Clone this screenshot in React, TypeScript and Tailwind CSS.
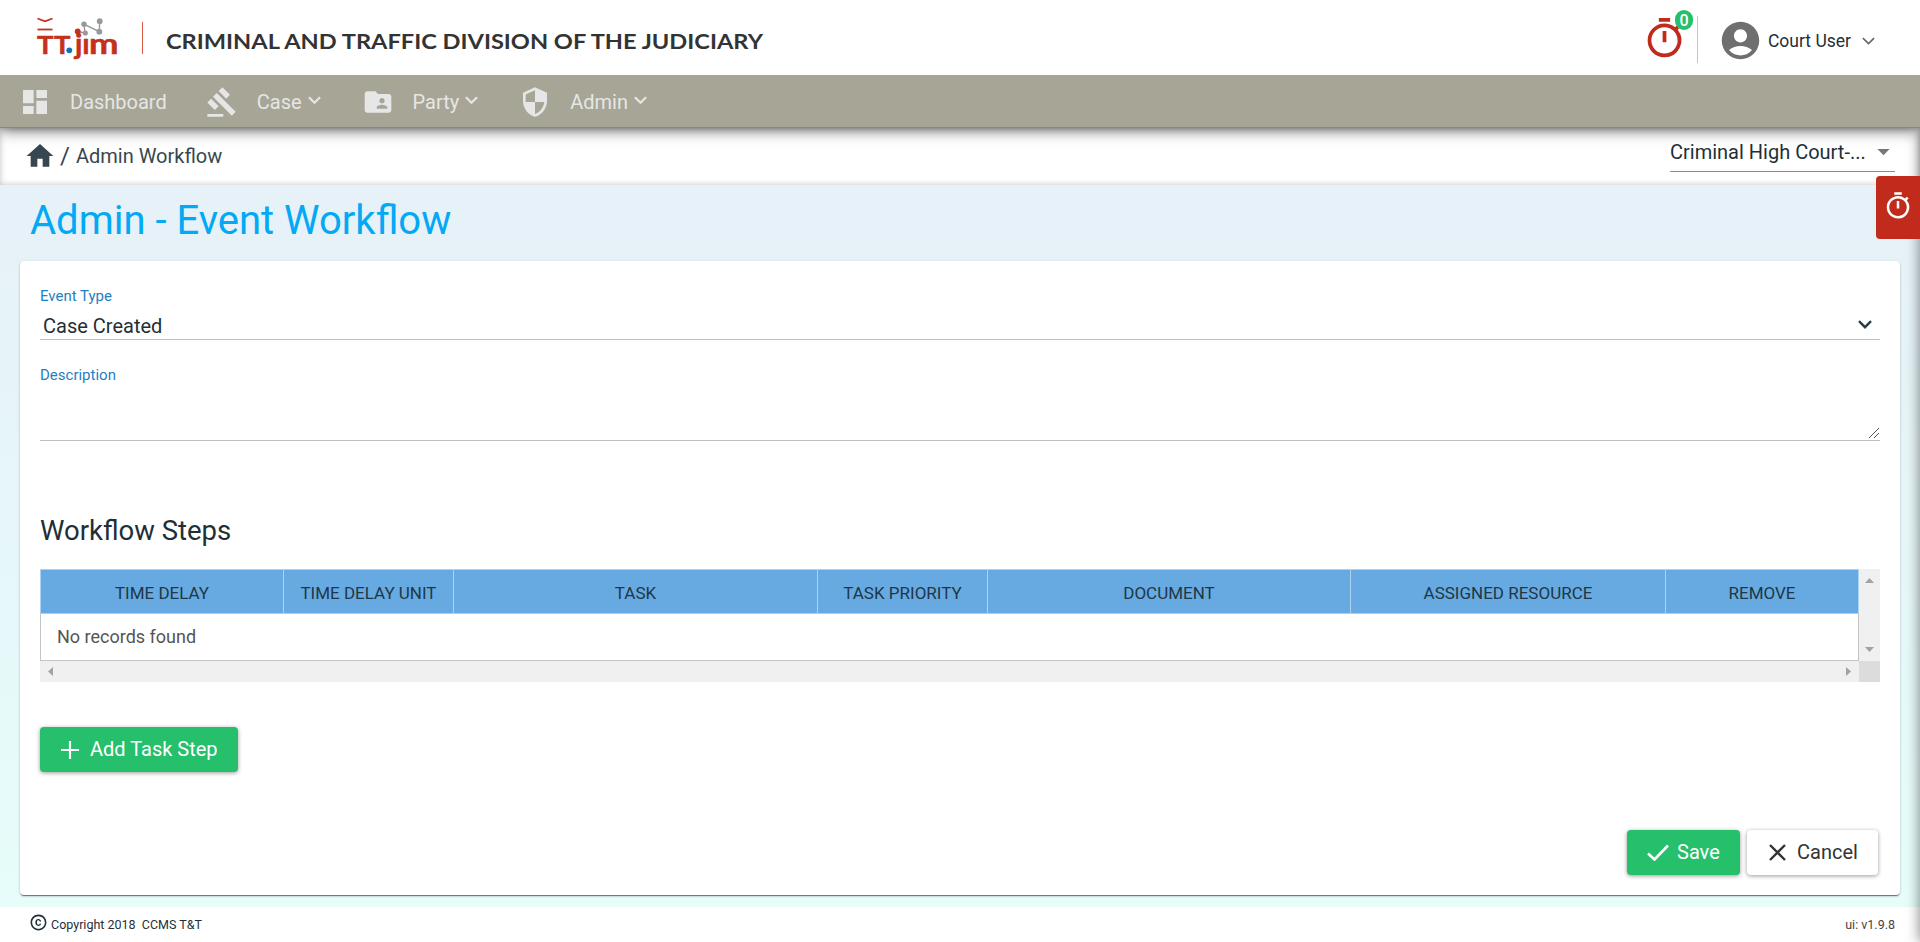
import type { ReactNode } from "react";
import {
  MdAccountCircle,
  MdArrowDropDown,
  MdCopyright,
  MdDashboard,
  MdFolderShared,
  MdGavel,
  MdHome,
  MdOutlineTimer,
  MdSecurity,
} from "react-icons/md";

function Chevron({ className }: { className: string }) {
  return (
    <svg className={className} viewBox="0 0 14 9" fill="none" stroke="currentColor" strokeWidth="2.400">
      <path d="M1 1.200l6 6 6-6" />
    </svg>
  );
}

function Logo() {
  return (
    <svg className="h-[44px] w-[84px] shrink-0" viewBox="36 18 84 44" fill="none">
      <path d="M37.500 20.500l7.500 2.800 7.500-2.800" stroke="#c4301c" strokeWidth="1.800" />
      <path d="M37.500 31.500h15" stroke="#c4301c" strokeWidth="1.800" />
      <path d="M78 33.500L85 35 84 26.300 99.300 33.700 99.700 23.200" stroke="#97999c" strokeWidth="1.400" />
      <g fill="#97999c">
        <circle cx="84" cy="26.300" r="2.700" />
        <circle cx="99.700" cy="23.200" r="2.900" />
        <circle cx="99.300" cy="33.700" r="2.900" />
        <circle cx="85.300" cy="35" r="2.600" />
      </g>
      <g
        fill="#c4301c"
        stroke="#c4301c"
        strokeWidth="0.5"
        strokeLinejoin="round"
        fontSize="25.500"
        className="font-['Lato',sans-serif] font-bold"
      >
        <text x="37" y="55.500" textLength="16.500" lengthAdjust="spacingAndGlyphs">T</text>
        <text x="54" y="55.500" textLength="16.500" lengthAdjust="spacingAndGlyphs">T</text>
        <text x="75" y="55.500" fontSize="29">j</text>
        <text x="82.300" y="55.500" fontSize="29">ı</text>
        <text x="89" y="55.500" fontSize="29" textLength="29.500" lengthAdjust="spacingAndGlyphs">m</text>
      </g>
      <circle cx="77.700" cy="33.400" r="2.900" fill="#c4301c" />
      <circle cx="69.300" cy="52.300" r="2.900" fill="#1272b8" />
    </svg>
  );
}

function Header() {
  return (
    <header className="relative z-20 flex h-[75px] shrink-0 items-center bg-white pl-9 pr-[45px]">
      <Logo />
      <div className="ml-[22px] h-8 w-px bg-[#dc5a43]" />
      <div className="ml-[23px] mt-[9px] w-[600px]">
        <svg className="block h-[30px] w-[600px]" viewBox="0 0 600 30">
          <text
            x="0"
            y="22"
            fontSize="21.500"
            textLength="597"
            lengthAdjust="spacingAndGlyphs"
            fill="#333"
            className="font-['Lato',sans-serif] font-bold"
          >
            CRIMINAL AND TRAFFIC DIVISION OF THE JUDICIARY
          </text>
        </svg>
      </div>
      <div className="ml-auto flex items-center">
        <div className="relative mt-[2px]">
          <MdOutlineTimer className="size-[45px] text-[#c02b1b]" />
          <span className="absolute -top-[6px] left-[33px] flex h-5 w-[18px] items-center justify-center rounded-full bg-[#26bf6b] pt-px text-base font-medium text-white">
            0
          </span>
        </div>
        <div className="ml-[10px] mt-[4px] h-[47px] w-px bg-[#c4c4c4]" />
        <MdAccountCircle className="ml-5 mt-[6px] size-[45px] text-[#6f6f6f]" />
        <span className="ml-[5px] mt-[8px] text-[17.500px]">Court User</span>
        <svg className="ml-[11px] mt-[6px] h-2 w-[13px]" viewBox="0 0 14 8" fill="none">
          <path d="M1 1l6 5.700L13 1" stroke="#666" strokeWidth="1.800" />
        </svg>
      </div>
    </header>
  );
}

function NavItem({ icon, label, menu }: { icon: ReactNode; label: string; menu?: boolean }) {
  return (
    <a className="flex items-center">
      {icon}
      <span className="ml-[19px]">{label}</span>
      {menu && <Chevron className="-mt-[3px] ml-[6px] mr-[6px] h-[8.500px] w-[13px]" />}
    </a>
  );
}

function Nav() {
  return (
    <nav className="relative z-10 flex h-[53px] shrink-0 items-center border-b border-[#8b8b6a] bg-[#a7a595] pl-[19px] pt-[2px] text-xl text-[#e6e6e6] shadow-[0_2px_14px_rgba(0,0,0,0.6)]">
      <NavItem icon={<MdDashboard className="size-8" />} label="Dashboard" />
      <div className="w-[39px]" />
      <NavItem icon={<MdGavel className="size-8" />} label="Case" menu />
      <div className="w-[35px]" />
      <NavItem icon={<MdFolderShared className="size-8" />} label="Party" menu />
      <div className="w-[35px]" />
      <NavItem icon={<MdSecurity className="size-8" />} label="Admin" menu />
    </nav>
  );
}

const columns = [
  { label: "TIME DELAY", width: "w-[243px]" },
  { label: "TIME DELAY UNIT", width: "w-[170px]" },
  { label: "TASK", width: "w-[364px]" },
  { label: "TASK PRIORITY", width: "w-[170px]" },
  { label: "DOCUMENT", width: "w-[363px]" },
  { label: "ASSIGNED RESOURCE", width: "w-[315px]" },
  { label: "REMOVE", width: "w-[193px]" },
];

function StepsTable() {
  return (
    <div className="mt-[22px]">
      <div className="flex">
        <div className="w-[1819px]">
          <div className="flex h-[45px] border-y border-l border-[#a9d2f3] bg-[#66aae1] text-[17px] text-[#1f3747]">
            {columns.map((c) => (
              <div
                key={c.label}
                className={`flex shrink-0 items-center justify-center border-r border-[#a9d2f3] pt-[4px] ${c.width}`}
              >
                {c.label}
              </div>
            ))}
          </div>
          <div className="flex h-[47px] items-center border-x border-b border-[#c4c4c4] pl-4 text-lg text-[#555]">
            No records found
          </div>
        </div>
        <div className="flex w-[21px] flex-col items-center justify-between bg-[#f0f0f0] py-[9px]">
          <svg className="h-[5px] w-[9px]" viewBox="0 0 9 5" fill="#a3a3a3">
            <path d="M0 5L4.500 0 9 5z" />
          </svg>
          <svg className="h-[5px] w-[9px]" viewBox="0 0 9 5" fill="#a3a3a3">
            <path d="M0 0h9L4.500 5z" />
          </svg>
        </div>
      </div>
      <div className="flex h-[21px]">
        <div className="flex w-[1819px] items-center justify-between bg-[#f0f0f0] px-2">
          <svg className="h-[9px] w-[5px]" viewBox="0 0 5 9" fill="#a3a3a3">
            <path d="M5 0v9L0 4.500z" />
          </svg>
          <svg className="h-[9px] w-[5px]" viewBox="0 0 5 9" fill="#a3a3a3">
            <path d="M0 0v9l5-4.500z" />
          </svg>
        </div>
        <div className="w-[21px] bg-[#dcdcdc]" />
      </div>
    </div>
  );
}

export default function App() {
  return (
    <div className="relative flex h-[942px] w-full flex-col overflow-hidden bg-white font-['Roboto',sans-serif] leading-none text-[#1f2f38]">
      <Header />
      <Nav />
      <div className="flex h-[57px] shrink-0 items-start justify-between bg-white pl-6 pr-[25px] shadow-[inset_0_0_6px_rgba(0,0,0,0.25)]">
        <div className="flex items-center pt-[12px] text-xl text-[#37474f]">
          <MdHome className="-mt-[1px] size-8 text-[#37474f]" />
          <span className="ml-1 text-2xl">/</span>
          <span className="ml-[6px]">Admin Workflow</span>
        </div>
        <div className="flex h-11 w-[225px] items-center justify-between border-b border-[#8a8a8a] pt-[4px] text-xl">
          <span>Criminal High Court-...</span>
          <MdArrowDropDown className="-mr-[3px] size-[29px] text-[#777]" />
        </div>
      </div>
      <main className="flex h-[722px] shrink-0 flex-col bg-linear-to-b from-[#e6f1f8] to-[#e6fdfa] px-5">
        <h1 className="ml-[10px] flex h-[76px] items-center pb-[5px] text-[40px] text-[#03a9f4]">
          Admin - Event Workflow
        </h1>
        <section className="flex h-[634px] flex-col rounded bg-white px-5 shadow-[0_1px_3px_rgba(0,0,0,0.2),0_1px_1px_rgba(0,0,0,0.14),0_2px_1px_-1px_rgba(0,0,0,0.4)]">
          <label className="mt-[26px] text-[15px] leading-[18px] text-[#1f80c1]">Event Type</label>
          <div className="flex h-[35px] items-center justify-between border-b border-[#bdbdbd] pl-[3px] pr-[8px] pt-[7px] text-xl">
            <span>Case Created</span>
            <Chevron className="-mt-[3px] h-[9px] w-[14px] text-[#263f4a]" />
          </div>
          <label className="mt-[26px] text-[15px] leading-[18px] text-[#1f80c1]">Description</label>
          <div className="flex h-[57px] items-end justify-end border-b border-[#bdbdbd] pb-[2px] pr-px">
            <svg className="size-[10px]" viewBox="0 0 10 10" fill="none" stroke="#555" strokeWidth="1">
              <path d="M0 10L10 0M5 10l5-5" />
            </svg>
          </div>
          <h2 className="mt-[74px] text-[27.500px] leading-[32px]">Workflow Steps</h2>
          <StepsTable />
          <button className="mt-[45px] flex h-[45px] w-[198px] shrink-0 items-center rounded bg-[#26bf6b] pl-[21px] text-xl text-white shadow-[0_1px_4px_rgba(0,0,0,0.4)]">
            <svg className="size-[18px]" viewBox="0 0 18 18" fill="none" stroke="currentColor" strokeWidth="2.200">
              <path d="M9 0v18M0 9h18" />
            </svg>
            <span className="-mt-[2px] ml-[11px]">Add Task Step</span>
          </button>
          <div className="mt-[58px] flex justify-end gap-[7px] pr-[2px] text-xl">
            <button className="flex h-[45px] w-[113px] items-center rounded bg-[#26bf6b] pl-5 text-white shadow-[0_1px_4px_rgba(0,0,0,0.4)]">
              <svg className="h-[17px] w-[22px]" viewBox="0 0 22 17" fill="none" stroke="currentColor" strokeWidth="2.600">
                <path d="M1 9.500l6.500 6L21 1.500" />
              </svg>
              <span className="-mt-[2px] ml-[8px]">Save</span>
            </button>
            <button className="flex h-[45px] w-[131px] items-center rounded bg-white pl-[22px] text-[#333] shadow-[0_1px_4px_rgba(0,0,0,0.4)]">
              <svg className="size-[17px]" viewBox="0 0 17 17" fill="none" stroke="currentColor" strokeWidth="2.400">
                <path d="M1 1l15 15M16 1L1 16" />
              </svg>
              <span className="-mt-[2px] ml-[11px]">Cancel</span>
            </button>
          </div>
        </section>
      </main>
      <footer className="flex h-[35px] shrink-0 items-center justify-between bg-white pl-[29px] pr-[25px] text-[12.500px]">
        <div className="flex items-center">
          <MdCopyright className="-mt-[4px] size-[19px]" />
          <span className="ml-[3px] mt-[2px] whitespace-pre">{"Copyright 2018  CCMS T&T"}</span>
        </div>
        <span className="mt-[2px] text-[#444]">ui: v1.9.8</span>
      </footer>
      <div className="absolute bottom-0 -right-5 top-[128px] w-5 shadow-[0_0_14px_rgba(0,0,0,0.5)]" />
      <button className="absolute right-0 top-[176px] z-20 flex h-[63px] w-11 items-center justify-center rounded-l-[4px] bg-[#c02b1b] pb-[4px] text-white">
        <MdOutlineTimer className="size-[30px]" />
      </button>
    </div>
  );
}
